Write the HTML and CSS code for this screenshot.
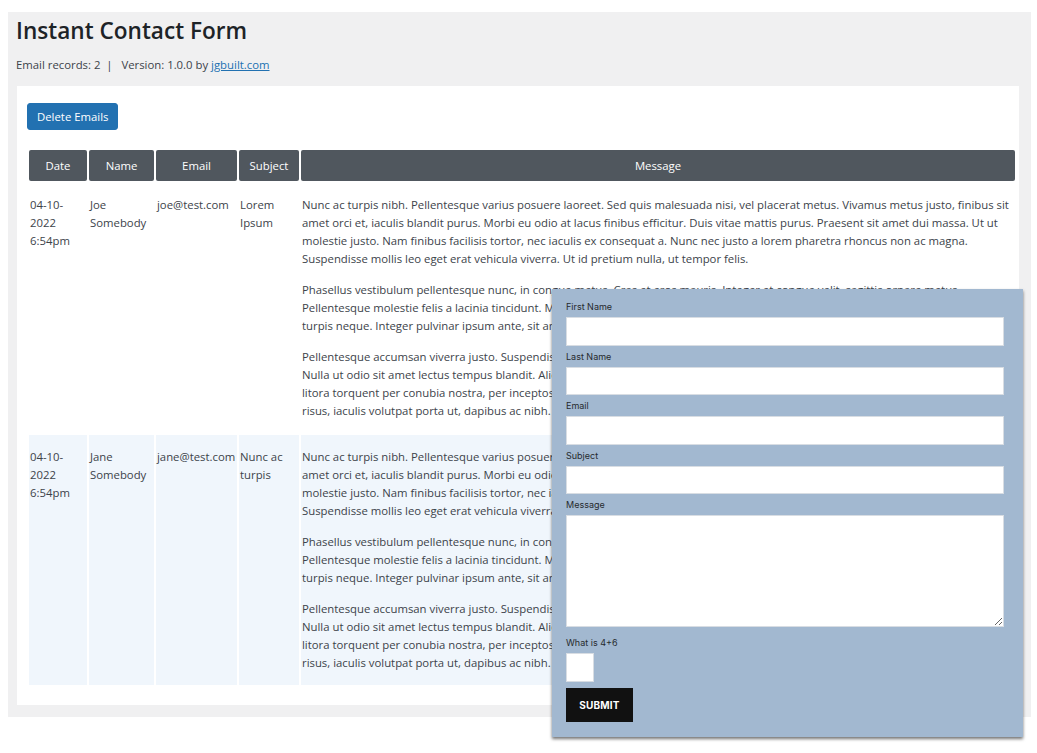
FILE: index.html
```html
<!DOCTYPE html>
<html lang="en">
<head>
<meta charset="utf-8">
<title>Instant Contact Form</title>
<link rel="stylesheet" href="styles.css">
</head>
<body>
<div class="wrap">
  <h1 class="title">Instant Contact Form</h1>
  <p class="meta">Email records: 2&nbsp; |&nbsp;&nbsp; Version: 1.0.0 by <a href="#">jgbuilt.com</a></p>
  <div class="card">
    <button class="btn-delete" type="button">Delete Emails</button>
    <table class="emails">
      <colgroup>
        <col class="c-date"><col class="c-name"><col class="c-email"><col class="c-subject"><col class="c-msg">
      </colgroup>
      <thead>
        <tr><th>Date</th><th>Name</th><th>Email</th><th>Subject</th><th>Message</th></tr>
      </thead>
      <tbody>
        <tr>
          <td>04-10-2022 6:54pm</td>
          <td>Joe Somebody</td>
          <td>joe@test.com</td>
          <td>Lorem Ipsum</td>
          <td class="msg">
            <p>Nunc ac turpis nibh. Pellentesque varius posuere laoreet. Sed quis malesuada nisi, vel placerat metus. Vivamus metus justo, finibus sit amet orci et, iaculis blandit purus. Morbi eu odio at lacus finibus efficitur. Duis vitae mattis purus. Praesent sit amet dui massa. Ut ut molestie justo. Nam finibus facilisis tortor, nec iaculis ex consequat a. Nunc nec justo a lorem pharetra rhoncus non ac magna. Suspendisse mollis leo eget erat vehicula viverra. Ut id pretium nulla, ut tempor felis.</p>
            <p>Phasellus vestibulum pellentesque nunc, in congue metus. Cras et eros mauris. Integer et congue velit, sagittis ornare metus. Pellentesque molestie felis a lacinia tincidunt. Mauris vel dui vitae nisl fringilla ultricies, vestibulum ante ipsum primis eu nunc lorem turpis neque. Integer pulvinar ipsum ante, sit amet tincidunt sem porta non. Sed in augue vel dolor.</p>
            <p>Pellentesque accumsan viverra justo. Suspendisse potenti. Donec feugiat ultrices nibh, at aliquet lectus fringilla vitae. Etiam odio eros. Nulla ut odio sit amet lectus tempus blandit. Aliquam erat volutpat. Proin sed tortor nisl ac finibus. Class aptent taciti sociosqu ad<br>litora torquent per conubia nostra, per inceptos himenaeos. Curabitur nec nisi eget orci pretium bibendum, sed ultricies<br>risus, iaculis volutpat porta ut, dapibus ac nibh.</p>
          </td>
        </tr>
        <tr class="alt">
          <td>04-10-2022 6:54pm</td>
          <td>Jane Somebody</td>
          <td>jane@test.com</td>
          <td>Nunc ac turpis</td>
          <td class="msg">
            <p>Nunc ac turpis nibh. Pellentesque varius posuere laoreet. Sed quis malesuada nisi, vel placerat metus. Vivamus metus justo, finibus sit amet orci et, iaculis blandit purus. Morbi eu odio at lacus finibus efficitur. Duis vitae mattis purus. Praesent sit amet dui massa. Ut ut molestie justo. Nam finibus facilisis tortor, nec iaculis ex consequat a. Nunc nec justo a lorem pharetra rhoncus non ac magna. Suspendisse mollis leo eget erat vehicula viverra. Ut id pretium nulla, ut tempor felis.</p>
            <p>Phasellus vestibulum pellentesque nunc, in congue metus. Cras et eros mauris. Integer et congue velit, sagittis ornare metus. Pellentesque molestie felis a lacinia tincidunt. Mauris vel dui vitae nisl fringilla ultricies, vestibulum ante ipsum primis eu nunc lorem turpis neque. Integer pulvinar ipsum ante, sit amet tincidunt sem porta non. Sed in augue vel dolor.</p>
            <p>Pellentesque accumsan viverra justo. Suspendisse potenti. Donec feugiat ultrices nibh, at aliquet lectus fringilla vitae. Etiam odio eros. Nulla ut odio sit amet lectus tempus blandit. Aliquam erat volutpat. Proin sed tortor nisl ac finibus. Class aptent taciti sociosqu ad<br>litora torquent per conubia nostra, per inceptos himenaeos. Curabitur nec nisi eget orci pretium bibendum, sed ultricies<br>risus, iaculis volutpat porta ut, dapibus ac nibh.</p>
          </td>
        </tr>
      </tbody>
    </table>
  </div>
</div>

<form class="contact">
  <div class="field">
    <label for="fn">First Name</label>
    <input id="fn" type="text">
  </div>
  <div class="field">
    <label for="ln">Last Name</label>
    <input id="ln" type="text">
  </div>
  <div class="field">
    <label for="em">Email</label>
    <input id="em" type="text">
  </div>
  <div class="field">
    <label for="sb">Subject</label>
    <input id="sb" type="text">
  </div>
  <div class="field">
    <label for="ms">Message</label>
    <textarea id="ms"></textarea>
  </div>
  <div class="field captcha">
    <label for="cp">What is 4+6</label>
    <input id="cp" type="text">
  </div>
  <button class="btn-submit" type="button">SUBMIT</button>
</form>
</body>
</html>
```

FILE: styles.css
```css
html, body {
  margin: 0;
  padding: 0;
  background: #ffffff;
}

body {
  font-family: "Open Sans", "Noto Sans", sans-serif;
  font-size: 11.35px;
  color: #3c434a;
  position: relative;
  min-height: 753px;
}

.wrap {
  margin: 12px 6px 0 8px;
  padding: 0 12px 12px 8px;
  background: #f0f0f1;
}

.title {
  margin: 0;
  padding-top: 4px;
  font-size: 22.6px;
  line-height: 29px;
  font-weight: 600;
  color: #1d2327;
}

.meta {
  margin: 11px 0 0;
  line-height: 18px;
  font-size: 11.35px;
  color: #3c434a;
}

.meta a {
  color: #2271b1;
  text-decoration: underline;
}

.card {
  margin: 12px 0 0 1px;
  background: #ffffff;
  padding: 17px 2px 18px 10px;
}

.btn-delete {
  display: block;
  height: 27px;
  padding: 0 9px;
  border: 1px solid #2271b1;
  border-radius: 3px;
  background: #2271b1;
  color: #ffffff;
  font-family: inherit;
  font-size: 11.35px;
  line-height: 25px;
  cursor: pointer;
}

.emails {
  margin-top: 18px;
  width: 990px;
  table-layout: fixed;
  border-collapse: separate;
  border-spacing: 2px;
  font-size: 11.35px;
  line-height: 18px;
}

.c-date { width: 58px; }
.c-name { width: 65px; }
.c-email { width: 81px; }
.c-subject { width: 60px; }
.c-msg { width: auto; }

.emails th {
  height: 31px;
  padding: 0;
  background: #50575e;
  color: #ffffff;
  font-weight: 400;
  text-align: center;
  border-radius: 2px;
}

.emails td {
  vertical-align: top;
  padding: 13px 1px 13px 1px;
  color: #3c434a;
}

.emails tr.alt td {
  background: #f0f6fc;
}

.emails .msg p {
  margin: 0;
}

.emails .msg p + p {
  margin-top: 13px;
}

/* contact form overlay */
.contact {
  position: absolute;
  left: 552px;
  top: 289px;
  width: 471px;
  box-sizing: border-box;
  margin: 0;
  padding: 12px 19px 15px 14px;
  background: #a2b8d0;
  box-shadow: 0 2px 3px rgba(0, 0, 0, 0.55);
  font-family: Inter, "Liberation Sans", sans-serif;
}

.field {
  display: flex;
  flex-direction: column;
}

.field + .field {
  margin-top: 5px;
}

.field label {
  display: block;
  font-size: 9px;
  line-height: 12px;
  color: #262a2e;
  margin-bottom: 4px;
}

.field input,
.field textarea {
  box-sizing: border-box;
  width: 438px;
  height: 28.5px;
  margin: 0;
  border: 1px solid #d8dde3;
  background: #ffffff;
  padding: 4px 6px;
  font-family: inherit;
  font-size: 12px;
}

.field textarea {
  height: 112px;
  resize: vertical;
}

.field.captcha {
  margin-top: 10px;
}

.field.captcha input {
  width: 28px;
}

.btn-submit {
  display: block;
  margin-top: 6px;
  width: 67px;
  height: 34px;
  padding: 0;
  border: 0;
  background: #111111;
  color: #ffffff;
  font-family: Inter, "Liberation Sans", sans-serif;
  font-size: 10px;
  font-weight: 700;
  letter-spacing: 0.2px;
  cursor: pointer;
}
```
